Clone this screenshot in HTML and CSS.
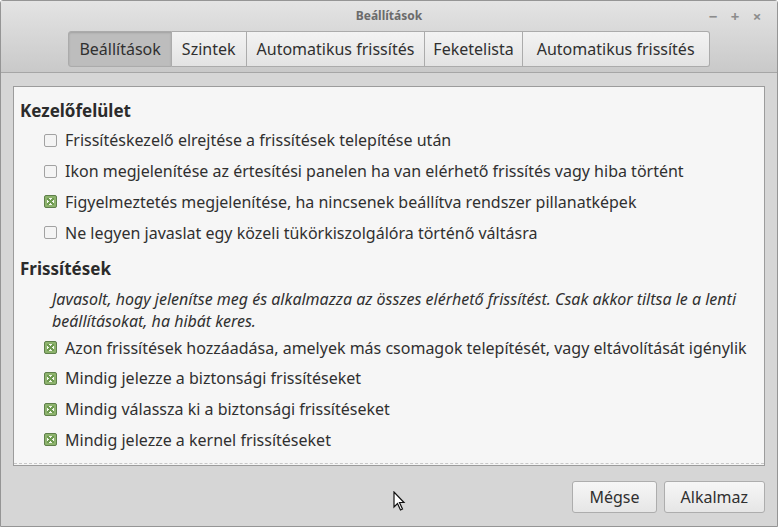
FILE: index.html
```html
<!DOCTYPE html>
<html lang="hu">
<head>
    <meta charset="UTF-8">
    <title>Beállítások</title>
    <link rel="stylesheet" href="styles.css">
</head>
<body>
    <div id="window">
        <div id="header">
            <div id="titlebar">
                <span id="title">Beállítások</span>
                <div id="controls">
                    <span class="ctl">&minus;</span>
                    <span class="ctl">+</span>
                    <span class="ctl">&times;</span>
                </div>
            </div>
            <div id="tabs">
                <div class="tab active">Beállítások</div>
                <div class="tab">Szintek</div>
                <div class="tab">Automatikus frissítés</div>
                <div class="tab narrow">Feketelista</div>
                <div class="tab wide">Automatikus frissítés</div>
            </div>
        </div>
        <div id="main">
            <div id="panel">
                <h3>Kezelőfelület</h3>
                <div class="row"><span class="box"></span>Frissítéskezelő elrejtése a frissítések telepítése után</div>
                <div class="row"><span class="box"></span>Ikon megjelenítése az értesítési panelen ha van elérhető frissítés vagy hiba történt</div>
                <div class="row"><span class="box checked"></span>Figyelmeztetés megjelenítése, ha nincsenek beállítva rendszer pillanatképek</div>
                <div class="row"><span class="box"></span>Ne legyen javaslat egy közeli tükörkiszolgálóra történő váltásra</div>
                <h3 class="second">Frissítések</h3>
                <p class="note">Javasolt, hogy jelenítse meg és alkalmazza az összes elérhető frissítést. Csak akkor tiltsa le a lenti beállításokat, ha hibát keres.</p>
                <div class="row"><span class="box checked"></span>Azon frissítések hozzáadása, amelyek más csomagok telepítését, vagy eltávolítását igénylik</div>
                <div class="row"><span class="box checked"></span>Mindig jelezze a biztonsági frissítéseket</div>
                <div class="row"><span class="box checked"></span>Mindig válassza ki a biztonsági frissítéseket</div>
                <div class="row"><span class="box checked"></span>Mindig jelezze a kernel frissítéseket</div>
            </div>
        </div>
        <div id="footer">
            <button>Mégse</button>
            <button>Alkalmaz</button>
        </div>
        <svg id="cursor" width="13" height="21" viewBox="0 0 13 21">
            <path d="M1 1 L1 16 L4.5 12.5 L7.5 19 L9.5 18 L6.5 11.5 L11 11.5 Z" fill="#fff" stroke="#111" stroke-width="1.2" stroke-linejoin="miter"/>
        </svg>
    </div>
</body>
</html>
```

FILE: styles.css
```css
body {
    margin: 0;
    font-family: "Noto Sans", sans-serif;
    color: #303030;
}
#window {
    position: relative;
    width: 778px;
    height: 527px;
    box-sizing: border-box;
    border: 1px solid #959595;
    border-radius: 3px 3px 0 0;
    background-color: #d6d6d6;
    display: flex;
    flex-direction: column;
}
#header {
    height: 71px;
    background: linear-gradient(#e4e4e4, #c9c9c9);
    border-bottom: 1px solid #a6a6a6;
}
#titlebar {
    height: 29px;
    display: flex;
    align-items: center;
    justify-content: center;
    position: relative;
}
#title {
    font-size: 12px;
    font-weight: bold;
    color: #6b6b6b;
}
#controls {
    position: absolute;
    right: 13px;
    top: 5px;
    display: flex;
    gap: 8px;
}
.ctl {
    width: 14px;
    text-align: center;
    font-size: 15px;
    font-weight: bold;
    color: #8c8c8c;
}
#tabs {
    display: flex;
    justify-content: center;
    margin-top: 1px;
}
.tab {
    height: 34px;
    line-height: 34px;
    padding: 0 10px;
    font-size: 16px;
    background: linear-gradient(#f3f3f3, #e3e3e3);
    border: 1px solid #ababab;
    border-left: none;
    color: #303030;
}
.tab:first-child {
    border-left: 1px solid #ababab;
    border-radius: 3px 0 0 3px;
}
.tab:last-child {
    border-radius: 0 3px 3px 0;
}
.tab.narrow {
    padding: 0 8px;
}
.tab.wide {
    padding: 0 14px;
}
.tab.active {
    background: #bdbdbd;
    box-shadow: inset 0 1px 2px rgba(0, 0, 0, 0.15);
}
#main {
    flex: 1;
    padding: 13px 12px 0 12px;
}
#panel {
    height: 380px;
    box-sizing: border-box;
    background-color: #f6f6f6;
    border: 1px solid #9c9c9c;
    padding: 10px 0 0 6px;
    position: relative;
}
#panel::after {
    content: "";
    position: absolute;
    left: 0;
    right: 0;
    bottom: 1px;
    border-bottom: 1px dashed #c8c8c8;
}
h3 {
    margin: 0;
    font-size: 17px;
    font-weight: bold;
    height: 28px;
    line-height: 28px;
    color: #2b2b2b;
}
h3.second {
    margin-top: 7px;
}
.row {
    height: 30.8px;
    display: flex;
    align-items: center;
    padding-left: 24px;
    font-size: 16px;
}
.box {
    width: 11px;
    height: 11px;
    border: 1px solid #a2a2a2;
    border-radius: 2px;
    background-color: #f4f4f4;
    margin-right: 8px;
    flex-shrink: 0;
}
.box.checked {
    border-color: #5f7f4b;
    background-color: #8db36d;
    position: relative;
}
.box.checked::after {
    content: "";
    position: absolute;
    left: 2px;
    top: 2px;
    width: 7px;
    height: 7px;
    background:
        linear-gradient(45deg, transparent 40%, #6e9a50 40%, #6e9a50 60%, transparent 60%),
        linear-gradient(-45deg, transparent 40%, #6e9a50 40%, #6e9a50 60%, transparent 60%),
        #f4f8ee;
}
.note {
    margin: 5px 0 0 32px;
    font-size: 16px;
    font-style: italic;
    line-height: 22px;
    padding-right: 20px;
}
#footer {
    height: 59px;
    display: flex;
    justify-content: flex-end;
    align-items: center;
    gap: 7px;
    padding-right: 12px;
}
button {
    height: 32px;
    font-family: "Noto Sans", sans-serif;
    font-size: 16px;
    color: #303030;
    background: linear-gradient(#f6f6f6, #e6e6e6);
    border: 1px solid #adadad;
    border-radius: 3px;
    padding: 0 16px;
}
#cursor {
    position: absolute;
    left: 392px;
    top: 490px;
}
```
